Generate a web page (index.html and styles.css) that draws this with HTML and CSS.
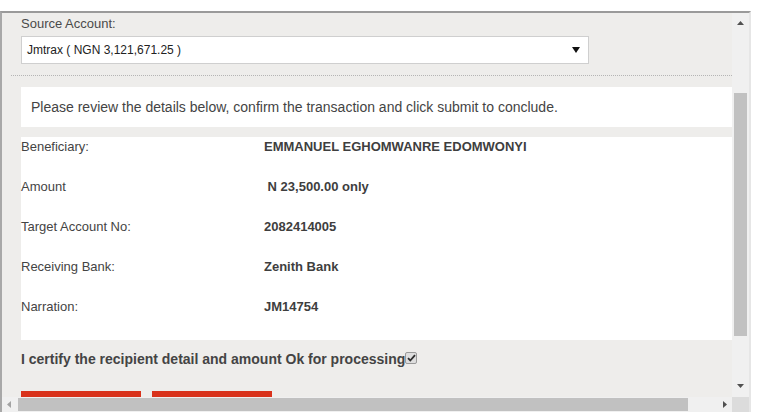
FILE: index.html
```html
<!DOCTYPE html>
<html>
<head>
<meta charset="utf-8">
<link rel="stylesheet" href="styles.css">
</head>
<body>
<div class="page">
  <div class="frame">
    <div class="viewport">
      <div class="content">
        <div class="field-label">Source Account:</div>
        <div class="select">
          <span>Jmtrax ( NGN 3,121,671.25 )</span>
          <svg class="select-arrow" width="8" height="6" viewBox="0 0 8 6"><path d="M0 0H8L4 6Z" fill="#111"/></svg>
        </div>
        <div class="divider"></div>
        <div class="notice">Please review the details below, confirm the transaction and click submit to conclude.</div>
        <div class="details">
          <div class="row"><span class="key">Beneficiary:</span><span class="val">EMMANUEL EGHOMWANRE EDOMWONYI</span></div>
          <div class="row"><span class="key">Amount</span><span class="val">&nbsp;N 23,500.00 only</span></div>
          <div class="row"><span class="key">Target Account No:</span><span class="val">2082414005</span></div>
          <div class="row"><span class="key">Receiving Bank:</span><span class="val">Zenith Bank</span></div>
          <div class="row"><span class="key">Narration:</span><span class="val">JM14754</span></div>
        </div>
        <div class="certify">
          <span>I certify the recipient detail and amount Ok for processing</span>
          <span class="check"><svg width="9" height="8" viewBox="0 0 9 8"><path d="M1 4.2L3.3 6.5L8 1.2" fill="none" stroke="#2e2e2e" stroke-width="1.8"/></svg></span>
        </div>
        <div class="buttons">
          <div class="btn"></div>
          <div class="btn"></div>
        </div>
      </div>
    </div>
    <div class="vscroll">
      <svg class="arrow-up" width="7" height="4" viewBox="0 0 7 4"><path d="M3.5 0L7 4H0Z" fill="#505050"/></svg>
      <div class="vthumb"></div>
      <svg class="arrow-down" width="7" height="4" viewBox="0 0 7 4"><path d="M0 0H7L3.5 4Z" fill="#505050"/></svg>
    </div>
    <div class="hscroll">
      <svg class="arrow-left" width="4" height="7" viewBox="0 0 4 7"><path d="M4 0V7L0 3.5Z" fill="#a3a3a3"/></svg>
      <div class="hthumb"></div>
      <svg class="arrow-right" width="4" height="7" viewBox="0 0 4 7"><path d="M0 0V7L4 3.5Z" fill="#505050"/></svg>
    </div>
    <div class="corner"></div>
  </div>
</div>
</body>
</html>
```
FILE: styles.css
```css
html, body {
  margin: 0;
  padding: 0;
  background: #ffffff;
  font-family: "Liberation Sans", Arial, sans-serif;
  overflow: hidden;
}
.page {
  padding-top: 11px;
  width: 767px;
  height: 401px;
}
.frame {
  width: 747px;
  border-top: 2px solid #9a9a9a;
  border-left: 2px solid #a8a8a8;
  border-right: 2px solid #e6e6e6;
  display: grid;
  grid-template-columns: 730px 17px;
  grid-template-rows: 384px 15px;
}
.viewport {
  overflow: hidden;
  background: #eeedeb;
}
.content {
  padding-left: 19px;
  color: #444;
}
.field-label {
  font-size: 13px;
  line-height: 15px;
  padding-top: 3px;
  color: #4a4a4a;
}
.select {
  margin-top: 5px;
  height: 26px;
  border: 1px solid #cfcfcf;
  background: #fff;
  display: flex;
  align-items: center;
  justify-content: space-between;
  padding: 0 8px 0 5px;
  box-sizing: content-box;
  width: 553px;
  font-size: 12px;
  color: #222;
}
.divider {
  margin-top: 11px;
  margin-left: -10px;
  border-top: 1px dotted #b5b5b5;
}
.notice {
  margin-top: 11px;
  background: #fff;
  padding: 12px 10px;
  font-size: 14px;
  line-height: 16px;
  color: #444;
}
.details {
  margin-top: 10px;
  background: #fff;
  padding-bottom: 3px;
}
.row {
  display: grid;
  grid-template-columns: 243px 1fr;
  height: 40px;
  font-size: 13px;
  line-height: 15px;
  padding-top: 2px;
  box-sizing: border-box;
}
.val {
  font-weight: bold;
  color: #3e3e3e;
}
.certify {
  display: flex;
  align-items: flex-start;
  margin-top: 11px;
  font-size: 14px;
  font-weight: bold;
  line-height: 16px;
  color: #444;
}
.check {
  width: 10px;
  height: 10px;
  margin-top: 1px;
  border: 1px solid #9a9a9a;
  border-radius: 2px;
  background: #dedede;
  display: flex;
  align-items: center;
  justify-content: center;
}
.buttons {
  display: flex;
  gap: 11px;
  margin-top: 24px;
}
.btn {
  width: 120px;
  height: 36px;
  background: #d9321b;
}
.vscroll {
  background: #f0f0f0;
  position: relative;
}
.arrow-up {
  position: absolute;
  left: 5px;
  top: 8px;
}
.vthumb {
  position: absolute;
  left: 2px;
  right: 2px;
  top: 80px;
  height: 243px;
  background: #c1c1c1;
}
.arrow-down {
  position: absolute;
  left: 5px;
  top: 371px;
}
.hscroll {
  background: #f0f0f0;
  position: relative;
}
.arrow-left {
  position: absolute;
  left: 5px;
  top: 4px;
}
.hthumb {
  position: absolute;
  left: 16px;
  width: 670px;
  top: 1px;
  bottom: 1px;
  background: #c1c1c1;
}
.arrow-right {
  position: absolute;
  left: 721px;
  top: 4px;
}
.corner {
  background: #dcdcdc;
}
```
